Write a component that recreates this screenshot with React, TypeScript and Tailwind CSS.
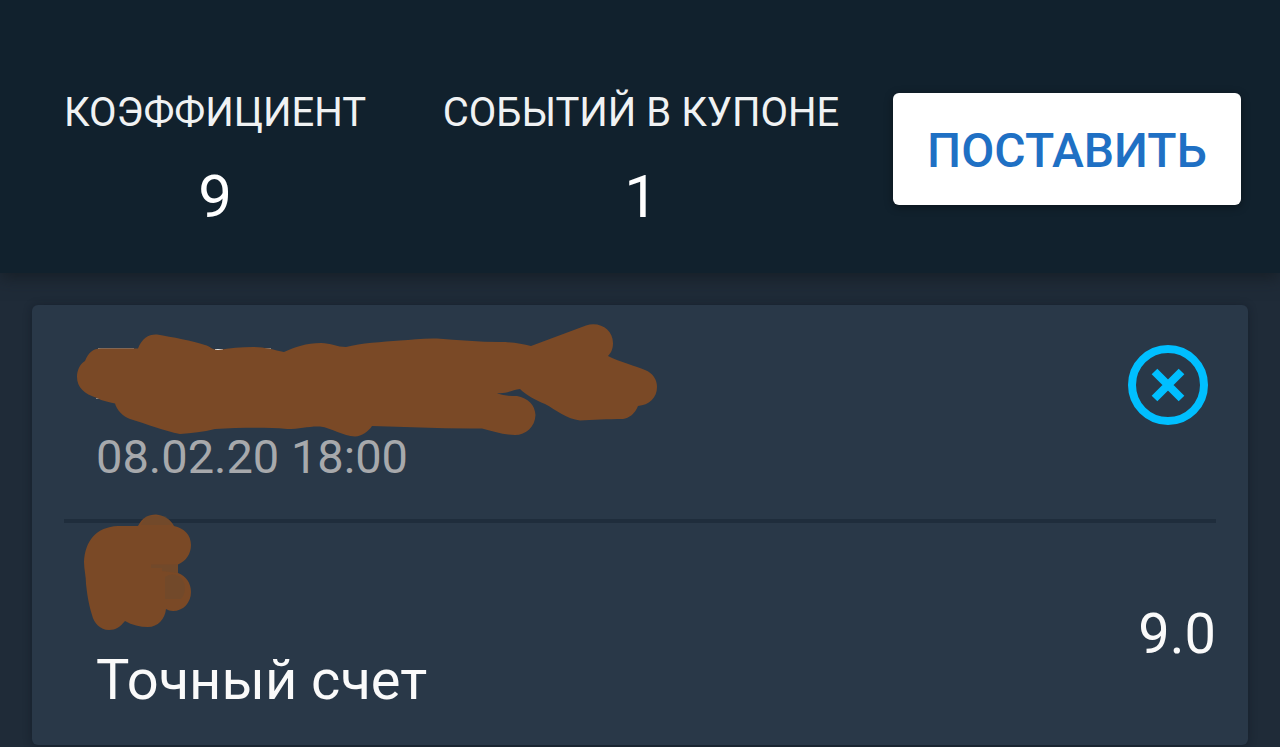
import type { ReactNode } from "react";

const stats = [
  { label: "КОЭФФИЦИЕНТ", value: "9" },
  { label: "СОБЫТИЙ В КУПОНЕ", value: "1" },
];

function Stat({ label, value }: { label: string; value: ReactNode }) {
  return (
    <div className="flex flex-col items-center gap-8 whitespace-nowrap">
      <dt className="text-[40px] leading-10 text-[#f0f2f3]">{label}</dt>
      <dd className="text-[60px] leading-16 text-white">{value}</dd>
    </div>
  );
}

function CloseIcon() {
  return (
    <svg viewBox="0 0 80 80" className="size-20" fill="none" stroke="#00bfff" aria-hidden="true">
      <circle cx="40" cy="40" r="36" strokeWidth="8" />
      <path d="M26.5 26.5 53.5 53.5M53.5 26.5 26.5 53.5" strokeWidth="8" />
    </svg>
  );
}

// Brush strokes that hide the team names and the market
function Scribbles() {
  return (
    <svg
      viewBox="32 305 640 340"
      className="pointer-events-none absolute left-0 top-0 h-[340px] w-[640px]"
      aria-hidden="true"
    >
      <path d="M98 348.5H134M260 348.500H271M96 398.500H103" stroke="#8a8580" strokeWidth="1" />
      <path d="M215 350H223" stroke="#e4e8ea" strokeWidth="2" />
      <path
        fill="#7a4926"
        d="M101 348.500H138C142 338 149 334 157 334.500C172 337 193 341 205 345C210 346 212 350 218 350C230 348 241 347 253 347C265 347 274 350 284 352C295 347 306 343 321 343C331 343 337 347 346 347C361 343 382 342 400 340.500C412 340 424 338 437 338.500C458 340 479 342 500 342C513 342 522 344 531 346L586 325.500C600 321 613 330 613 343C613 349 611 353 608 356C620 362 636 366 645 370C653 373 657 380 657 387C657 398 649 405 638 406C635 414 629 418 623 419C608 419 592 420 580 420.500C567 419 556 410 545 404C535 400 526 395 520 389C512 390 506 394 497 393C503 396 510 396 517 396C528 398 535 405 535.500 415C535 427 526 435 515 435C503 435 492 431 482 428.500C445 429 408 427 372 426C368 432 362 436 355 436.500C343 436 332 428 320 426.500C309 426 300 429 287 429C263 427 238 428 215 429C203 432 192 433 180 434C164 431 147 424 130 419C122 416 117 410 115 403.500C109 402 102 401 97 398C84 394 77 387 77 377C77 370 80 364 85 361C88 353 93 348.500 101 348.500Z"
      />
      <path
        fill="#7a4926"
        d="M118 526H138C142 518 148 514.500 156 514.500C164 515 171 520 174 526C184 528 191 535 191 545C191 554 186 561 178 564.500V573C186 576 191 583 191 592C191 603 183 611 173 611C170 611 168 610 166 609C165 619 158 627 148 627C140 627 132 625 125 621C120 627 116 630 109 630C100 630 94 623 92 615C88 602 87 592 86 584C86 576 84 569 84 562C85 541 96 527 118 526Z"
      />
      <path
        fill="#5a4c38"
        fillOpacity="0.25"
        d="M146 516H166L172 525H141ZM151 564.500H178V573L162 571V568H151ZM165 577C171 573 178 574 182 579C186 584 186 594 181 599H165Z"
      />
    </svg>
  );
}

export default function App() {
  return (
    <div className="min-h-screen bg-[#1f2b38] font-['Roboto',sans-serif]">
      <header className="relative grid grid-cols-3 items-start bg-[#11212d] pt-[93px] pb-11 pl-0.5 shadow-[0_4px_16px_rgba(18,24,30,0.7)]">
        <dl className="col-span-2 grid grid-cols-2">
          {stats.map((s) => (
            <Stat key={s.label} label={s.label} value={s.value} />
          ))}
        </dl>
        <button
          type="button"
          className="justify-self-center whitespace-nowrap rounded-md bg-white px-[34px] pt-[30px] pb-[26px] text-5xl leading-14 font-medium text-[#1f70c4] shadow-[0_2px_8px_rgba(0,0,0,0.4)]"
        >
          ПОСТАВИТЬ
        </button>
      </header>

      <main className="px-8 pt-8">
        <article className="relative rounded-md bg-[#293848] px-8 pt-10 shadow-[0_1px_8px_rgba(10,18,28,0.45)]">
          <div className="flex items-start justify-between border-b-4 border-[#1f2d3c] pr-2 pb-[34px] pl-8">
            <time dateTime="2020-02-08T18:00" className="pt-21 text-[47px] leading-14 text-[#a7a9ac]">
              08.02.20 18:00
            </time>
            <button type="button" aria-label="Удалить событие" className="rounded-full">
              <CloseIcon />
            </button>
          </div>
          <div className="flex items-center justify-between text-[56px] leading-16 text-[#fafafa]">
            <h2 className="pt-[125px] pb-[33px] pl-8">Точный счет</h2>
            <span>9.0</span>
          </div>
          <Scribbles />
        </article>
      </main>
    </div>
  );
}
